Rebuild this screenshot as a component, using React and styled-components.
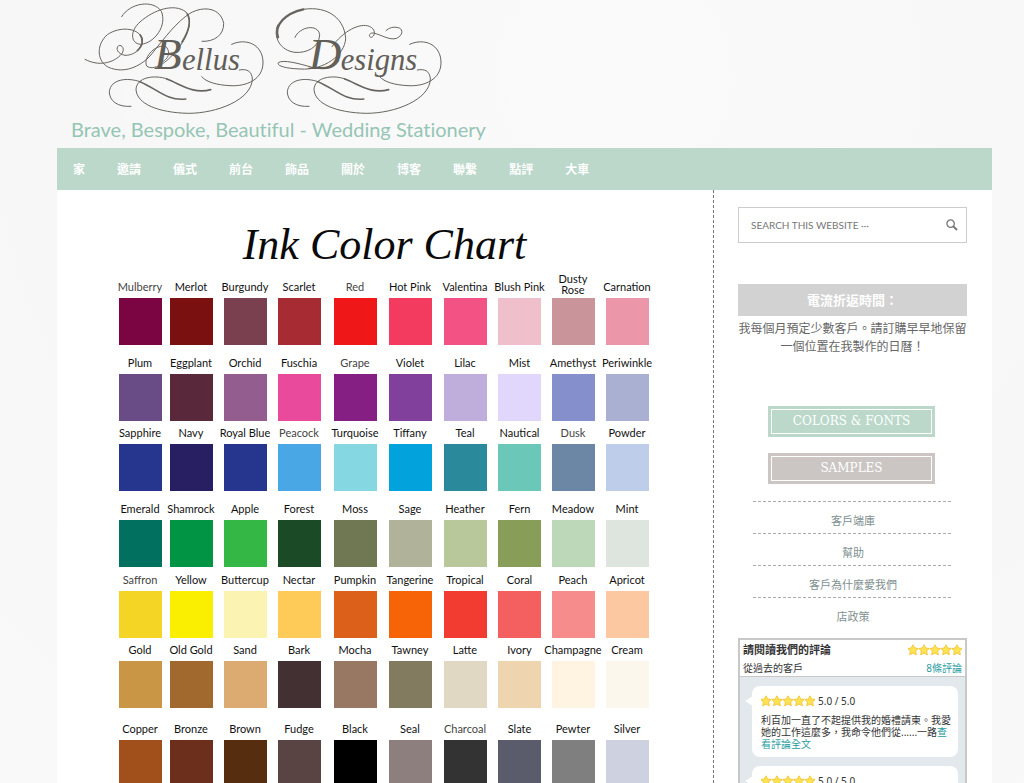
import React, { useState } from "react";
import styled, { createGlobalStyle } from "styled-components";

const GlobalStyle = createGlobalStyle`
	* {
		box-sizing: border-box;
	}
	body {
		margin: 0;
		background-color: #f7f7f7;
		background-image: radial-gradient(circle at 60% 10%, #fafafa 0%, #f7f7f7 60%, #f9f9f9 100%);
		font-family: "Noto Sans", "Noto Sans CJK TC", sans-serif;
		color: #666;
	}
	a {
		text-decoration: none;
	}
	p, h1, h2, h3, ul {
		margin: 0;
		padding: 0;
	}
`;

const Page = styled.div`
	height: 100vh;
	overflow: hidden;
	padding: 0 32px 0 57px;
	display: flex;
	flex-direction: column;
`;

const Header = styled.header`
	height: 148px;
	flex-shrink: 0;
`;

const LogoLink = styled.a`
	display: block;
	svg {
		display: block;
	}
`;

const Tagline = styled.p`
	padding-left: 14px;
	font-family: Lato, sans-serif;
	font-size: 20px;
	font-variant-ligatures: none;
	line-height: 28px;
	color: #95c5b4;
`;

const Nav = styled.nav`
	display: flex;
	flex-shrink: 0;
	height: 42px;
	align-items: center;
	background-color: #bbd8ca;
	a {
		padding: 0 16px;
		font-size: 12px;
		font-weight: bold;
		color: white;
	}
`;

const Columns = styled.div`
	display: flex;
	flex: 1;
	min-height: 0;
	background-color: white;
`;

const Main = styled.main`
	flex: 1;
	padding: 25px 61px 0 58px;
`;

const ChartTitle = styled.h1`
	height: 64px;
	padding-left: 2px;
	font-family: "Liberation Serif", serif;
	font-style: italic;
	font-weight: normal;
	font-size: 44px;
	line-height: 60px;
	text-align: center;
	color: #0a0a0a;
`;

const SwatchRow = styled.div`
	display: grid;
	grid-template-columns: 50fr 52fr 56fr 52fr 60fr 50fr 60fr 49fr 58fr 50fr;
	align-items: end;
	margin-bottom: ${(props) => props.$space}px;
`;

const SwatchCell = styled.div`
	display: flex;
	flex-direction: column;
	align-items: center;
	gap: 3px;
	min-width: 0;
`;

const SwatchName = styled.span`
	display: flex;
	align-items: flex-end;
	height: 16px;
	font-family: Lato, sans-serif;
	font-size: 11px;
	line-height: ${(props) => (props.$tall ? "11px" : "16px")};
	text-align: center;
	white-space: pre;
	color: ${(props) => (props.$soft ? "#444" : "#111")};
`;

const Swatch = styled.div`
	width: 43px;
	height: 47px;
	background-color: ${(props) => props.$color};
`;

const Sidebar = styled.aside`
	width: 279px;
	flex-shrink: 0;
	padding: 17px 25px 0 24px;
	border-left: 1px dashed #777;
`;

const SearchForm = styled.form`
	display: flex;
	align-items: center;
	height: 36px;
	padding: 0 8px 0 12px;
	border: 1px solid #ccc;
	input {
		flex: 1;
		min-width: 0;
		padding: 0;
		border: none;
		outline: none;
		font-family: Lato, "Noto Sans CJK TC", sans-serif;
		font-size: 10px;
		color: #777;
	}
	input::placeholder {
		color: #777;
		opacity: 1;
	}
	button {
		display: flex;
		padding: 0;
		border: none;
		background: none;
		cursor: pointer;
	}
`;

const Notice = styled.section`
	margin-top: 41px;
	text-align: center;
	h2 {
		background-color: #d2d2d2;
		font-size: 13px;
		line-height: 32px;
		color: white;
	}
	p {
		padding-top: 4px;
		font-size: 12px;
		line-height: 18px;
	}
`;

const Buttons = styled.div`
	display: flex;
	flex-direction: column;
	gap: 16px;
	margin: 50px 32px 17px 30px;
`;

const FramedLink = styled.a`
	padding: 3px;
	background-color: ${(props) => props.$color};
	span {
		display: block;
		border: 1px solid white;
		font-family: "DejaVu Serif", serif;
		font-size: 12px;
		line-height: 23px;
		text-align: center;
		color: white;
	}
`;

const LinkList = styled.ul`
	margin: 0 14px 0 15px;
	list-style: none;
	li {
		height: 32px;
		background: repeating-linear-gradient(to right, #aaa 0 3px, transparent 3px 5px) top / 100% 1px no-repeat;
		text-align: center;
	}
	a {
		font-size: 11px;
		line-height: 40px;
		color: #80908f;
	}
`;

const Reviews = styled.section`
	margin-top: 9px;
	border: 2px solid #c8c8c8;
	background-color: #e3e8ec;
	color: #333;
	a {
		color: #2a9d9f;
	}
`;

const ReviewsHeader = styled.header`
	display: flex;
	justify-content: space-between;
	padding: 0 3px;
	background-color: white;
	border-bottom: 1px solid #c8c8c8;
	font-size: 10px;
	line-height: 16px;
	h3 {
		font-size: 11px;
		line-height: 20px;
	}
`;

const Score = styled.div`
	display: flex;
	flex-direction: column;
	align-items: flex-end;
	svg {
		margin: 4px 0;
	}
`;

const Bubble = styled.article`
	position: relative;
	margin: 9px 7px 0 12px;
	padding: 6px 5px 7px 9px;
	border-radius: 8px;
	background-color: white;
	font-size: 10px;
	line-height: 12px;
	&::before {
		content: "";
		position: absolute;
		left: -7px;
		top: 10px;
		border: 5px solid transparent;
		border-left-width: 0;
		border-right: 8px solid white;
	}
`;

const Rating = styled.div`
	display: flex;
	align-items: center;
	gap: 3px;
	line-height: 18px;
	margin-bottom: 4px;
`;

const navLinks = ["家", "邀請", "儀式", "前台", "飾品", "關於", "博客", "聯繫", "點評", "大車"];

const sideLinks = ["客戶端庫", "幫助", "客戶為什麼愛我們", "店政策"];

const softNames = ["Mulberry", "Red", "Grape", "Peacock", "Dusk", "Saffron", "Charcoal"];

const rows = [
	{
		space: 10,
		inks: [
			["Mulberry", "#7b0442"],
			["Merlot", "#7a1010"],
			["Burgundy", "#7b4050"],
			["Scarlet", "#a72b33"],
			["Red", "#ef1717"],
			["Hot Pink", "#f23b5e"],
			["Valentina", "#f25284"],
			["Blush Pink", "#efbfcb"],
			["Dusty\nRose", "#ca959a"],
			["Carnation", "#ec97a9"],
		],
	},
	{
		space: 4,
		inks: [
			["Plum", "#694b86"],
			["Eggplant", "#5a283b"],
			["Orchid", "#945d8f"],
			["Fuschia", "#e94a9c"],
			["Grape", "#851f83"],
			["Violet", "#81409b"],
			["Lilac", "#bfaddb"],
			["Mist", "#e1d7fd"],
			["Amethyst", "#858fcc"],
			["Periwinkle", "#a9b0d2"],
		],
	},
	{
		space: 10,
		inks: [
			["Sapphire", "#26368e"],
			["Navy", "#271f61"],
			["Royal Blue", "#26368e"],
			["Peacock", "#4aa7e6"],
			["Turquoise", "#85d7e1"],
			["Tiffany", "#02a3dc"],
			["Teal", "#2b899c"],
			["Nautical", "#6bc7b7"],
			["Dusk", "#6c86a6"],
			["Powder", "#becdea"],
		],
	},
	{
		space: 5,
		inks: [
			["Emerald", "#02705e"],
			["Shamrock", "#029445"],
			["Apple", "#35b745"],
			["Forest", "#1b4b26"],
			["Moss", "#707853"],
			["Sage", "#b0b299"],
			["Heather", "#b9c89b"],
			["Fern", "#879d58"],
			["Meadow", "#bcd8b9"],
			["Mint", "#dde5de"],
		],
	},
	{
		space: 4,
		inks: [
			["Saffron", "#f4d525"],
			["Yellow", "#fbef00"],
			["Buttercup", "#fbf3b1"],
			["Nectar", "#fecb59"],
			["Pumpkin", "#dc5f1a"],
			["Tangerine", "#f76408"],
			["Tropical", "#f33c31"],
			["Coral", "#f45f5f"],
			["Peach", "#f68d8c"],
			["Apricot", "#fcc8a2"],
		],
	},
	{
		space: 13,
		inks: [
			["Gold", "#c89645"],
			["Old Gold", "#a1692d"],
			["Sand", "#dcab71"],
			["Bark", "#433033"],
			["Mocha", "#997863"],
			["Tawney", "#827b60"],
			["Latte", "#e1d8c3"],
			["Ivory", "#eed5af"],
			["Champagne", "#fff3e1"],
			["Cream", "#fcf7ec"],
		],
	},
	{
		space: 0,
		inks: [
			["Copper", "#a1501c"],
			["Bronze", "#6b2f1b"],
			["Brown", "#572d0f"],
			["Fudge", "#594443"],
			["Black", "#000000"],
			["Seal", "#8e7f7f"],
			["Charcoal", "#333333"],
			["Slate", "#5a5b6b"],
			["Pewter", "#807f80"],
			["Silver", "#ced1e0"],
		],
	},
];

// flourish that hangs under and behind the end of each word
const WordSwash = ({ x }) => (
	<g transform={`translate(${x} 0)`}>
		<path d="M545 133C590 112 638 135 639 186C640 238 590 260 540 257C500 255 468 246 455 230" />
		<path d="M568 210C592 205 606 215 607 237C605 300 500 340 415 340C325 338 260 312 258 268C260 232 312 223 352 237" />
		<path d="M243 319C202 322 178 302 178 275C182 238 230 231 270 245" />
		<path strokeWidth="5" d="M350 237C395 254 430 283 482 269M270 245C322 267 350 303 407 297" />
	</g>
);

const Logo = () => (
	<svg width="460" height="115" viewBox="21 0 1380 345" role="img" aria-label="Bellus Designs">
		<g fill="none" stroke="#68645f" strokeWidth="3" strokeLinecap="round">
			<path d="M215 50C240 8 310 -2 334 34C352 76 314 130 272 133C240 130 240 92 270 66C310 30 372 8 408 36C436 70 400 130 380 150C350 190 310 214 290 198C278 170 320 130 348 140C366 160 350 184 330 187" />
			<path strokeWidth="5" d="M412 42C426 66 412 100 396 126" />
			<path d="M105 178C145 200 190 190 215 162C226 146 216 134 206 137C196 144 202 162 225 166C262 166 284 134 275 112C262 84 210 78 172 104C136 136 142 186 176 202C222 222 270 200 300 168C350 106 380 66 420 40C462 16 512 24 521 70C522 104 494 126 456 124" />
			<path strokeWidth="5" d="M262 152C280 136 280 116 270 104" />
			<path d="M735 112C748 80 804 70 809 104C808 142 770 160 735 157C690 152 668 110 683 75" />
			<path strokeWidth="7" d="M684 112C672 76 705 40 760 28" />
			<path d="M750 30C820 14 882 46 887 115C885 165 822 212 750 207C700 205 680 196 685 188C700 178 745 190 790 203C832 212 858 202 866 182" />
			<path d="M846 140C880 92 930 68 958 79C980 88 975 112 962 112C954 108 960 97 970 99C994 104 1018 122 1040 115C1058 106 1060 90 1048 84C1030 78 1016 84 1008 92" />
			<WordSwash x={0} />
			<WordSwash x={534} />
		</g>
		<g fill="#625e58" fontFamily="'Liberation Serif', serif" fontStyle="italic">
			<text x="312" y="207" fontSize="136">B</text>
			<text x="396" y="209" fontSize="92">ellus</text>
			<text x="776" y="207" fontSize="136">D</text>
			<text x="872" y="209" fontSize="92">esigns</text>
		</g>
	</svg>
);

const Stars = () => (
	<svg width="54" height="12" viewBox="0 0 54 12" role="img" aria-label="5 stars">
		{[0, 1, 2, 3, 4].map((n) => (
			<path
				key={n}
				transform={`translate(${n * 11 - 1} 0)`}
				d="M6 .8L7.6 4L11.2 4.5L8.6 7L9.3 10.8L6 9L2.7 10.8L3.4 7L.8 4.5L4.4 4Z"
				fill="#ffe352"
				stroke="#f5c83c"
				strokeWidth="1"
				strokeLinejoin="round"
			/>
		))}
	</svg>
);

const SearchIcon = () => (
	<svg width="12" height="12" viewBox="0 0 12 12" fill="none" stroke="#777">
		<circle cx="4.6" cy="4.6" r="3.7" strokeWidth="1.3" />
		<path d="M7.4 7.4L11 11" strokeWidth="2" />
	</svg>
);

const Review = ({ children }) => (
	<Bubble>
		<Rating>
			<Stars />
			<span>5.0 / 5.0</span>
		</Rating>
		<p>
			{children}
			<a href="#review">查看評論全文</a>
		</p>
	</Bubble>
);

const App = () => {
	const [search, setSearch] = useState("");

	return (
		<>
			<GlobalStyle />
			<Page>
				<Header>
					<LogoLink href="#home">
						<Logo />
					</LogoLink>
					<Tagline>Brave, Bespoke, Beautiful - Wedding Stationery</Tagline>
				</Header>
				<Nav>
					{navLinks.map((name) => (
						<a key={name} href="#nav">
							{name}
						</a>
					))}
				</Nav>
				<Columns>
					<Main>
						<ChartTitle>Ink Color Chart</ChartTitle>
						{rows.map((row) => (
							<SwatchRow key={row.inks[0][0]} $space={row.space}>
								{row.inks.map(([name, color]) => (
									<SwatchCell key={name}>
										<SwatchName $tall={name.includes("\n")} $soft={softNames.includes(name)}>
											{name}
										</SwatchName>
										<Swatch $color={color} />
									</SwatchCell>
								))}
							</SwatchRow>
						))}
					</Main>
					<Sidebar>
						<SearchForm onSubmit={(e) => e.preventDefault()}>
							<input
								type="search"
								aria-label="Search this website"
								placeholder="SEARCH THIS WEBSITE ···"
								value={search}
								onChange={(e) => setSearch(e.target.value)}
							/>
							<button type="submit" aria-label="Search">
								<SearchIcon />
							</button>
						</SearchForm>
						<Notice>
							<h2>電流折返時間：</h2>
							<p>我每個月預定少數客戶。請訂購早早地保留一個位置在我製作的日曆！</p>
						</Notice>
						<Buttons>
							<FramedLink href="#colors" $color="#bbd8ca">
								<span>COLORS &amp; FONTS</span>
							</FramedLink>
							<FramedLink href="#samples" $color="#cbc6c3">
								<span>SAMPLES</span>
							</FramedLink>
						</Buttons>
						<LinkList>
							{sideLinks.map((name) => (
								<li key={name}>
									<a href="#info">{name}</a>
								</li>
							))}
						</LinkList>
						<Reviews>
							<ReviewsHeader>
								<div>
									<h3>請閱讀我們的評論</h3>
									<p>從過去的客戶</p>
								</div>
								<Score>
									<Stars />
									<a href="#reviews">8條評論</a>
								</Score>
							</ReviewsHeader>
							<Review>利百加一直了不起提供我的婚禮請柬。我愛她的工作這麼多，我命令他們從......一路</Review>
							<Review />
						</Reviews>
					</Sidebar>
				</Columns>
			</Page>
		</>
	);
};

export default App;
